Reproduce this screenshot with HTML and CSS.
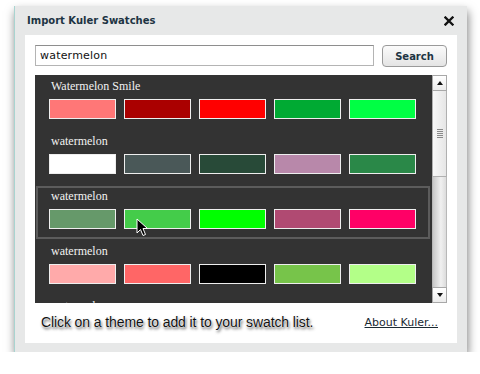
FILE: index.html
```html
<!DOCTYPE html>
<html lang="en">
<head>
    <meta charset="UTF-8">
    <title>Import Kuler Swatches</title>
    <link rel="stylesheet" href="styles.css">
</head>
<body>
    <div class="dialog">
        <div class="titlebar">
            <span class="title">Import Kuler Swatches</span>
            <svg class="close" width="10" height="10" viewBox="0 0 10 10">
                <path d="M1.5 1.5 L8.5 8.5 M8.5 1.5 L1.5 8.5" stroke="#111" stroke-width="2.3" stroke-linecap="square"/>
            </svg>
        </div>
        <div class="panel">
            <div class="searchrow">
                <input class="query" type="text" value="watermelon">
                <button class="search">Search</button>
            </div>
            <div class="results">
                <div class="list">
                    <div class="theme">
                        <div class="name">Watermelon Smile</div>
                        <div class="swatches">
                            <span class="swatch" style="background:#ff7777"></span>
                            <span class="swatch" style="background:#aa0000"></span>
                            <span class="swatch" style="background:#ff0000"></span>
                            <span class="swatch" style="background:#00aa33"></span>
                            <span class="swatch" style="background:#00ff44"></span>
                        </div>
                    </div>
                    <div class="theme">
                        <div class="name">watermelon</div>
                        <div class="swatches">
                            <span class="swatch" style="background:#ffffff"></span>
                            <span class="swatch" style="background:#4a5858"></span>
                            <span class="swatch" style="background:#284a38"></span>
                            <span class="swatch" style="background:#b888aa"></span>
                            <span class="swatch" style="background:#2a8848"></span>
                        </div>
                    </div>
                    <div class="theme hover">
                        <div class="name">watermelon</div>
                        <div class="swatches">
                            <span class="swatch" style="background:#66996a"></span>
                            <span class="swatch" style="background:#44cc4a"></span>
                            <span class="swatch" style="background:#00ff00"></span>
                            <span class="swatch" style="background:#b04a72"></span>
                            <span class="swatch" style="background:#ff0066"></span>
                        </div>
                    </div>
                    <div class="theme">
                        <div class="name">watermelon</div>
                        <div class="swatches">
                            <span class="swatch" style="background:#ffaaaa"></span>
                            <span class="swatch" style="background:#ff6666"></span>
                            <span class="swatch" style="background:#000000"></span>
                            <span class="swatch" style="background:#77c44a"></span>
                            <span class="swatch" style="background:#b3ff88"></span>
                        </div>
                    </div>
                    <div class="theme">
                        <div class="name">watermelon</div>
                    </div>
                </div>
                <div class="scrollbar">
                    <div class="arrow up"></div>
                    <div class="thumb"><span class="grip"></span></div>
                    <div class="track"></div>
                    <div class="arrow down"></div>
                </div>
            </div>
            <div class="footer">
                <span class="hint">Click on a theme to add it to your swatch list.</span>
                <a class="about" href="#">About Kuler...</a>
            </div>
        </div>
    </div>

    <!-- mouse pointer over the hovered theme -->
    <svg class="cursor" width="14" height="20" viewBox="0 0 14 20">
        <path d="M1 1 L1 15 L4.5 11.5 L7 17.5 L9.5 16.5 L7 10.5 L11.5 10.5 Z" fill="#000" stroke="#fff" stroke-width="1"/>
    </svg>
</body>
</html>
```

FILE: styles.css
```css
body {
    margin: 0;
    background: #ffffff;
    font-family: "DejaVu Sans", Verdana, sans-serif;
}

.dialog {
    margin: 6px 0 0 14px;
    width: 453px;
    height: 346px;
    background: #e7e8e8;
    border-left: 1px solid #a9d4d0;
    box-sizing: border-box;
    box-shadow: 1px 5px 9px rgba(0, 0, 0, 0.5);
}

.titlebar {
    height: 29px;
    display: flex;
    align-items: center;
    justify-content: space-between;
    padding: 0 13px 0 12px;
    box-sizing: border-box;
}

.title {
    font-size: 10px;
    font-weight: bold;
    color: #1d3443;
}

.panel {
    margin-left: 10px;
    width: 432px;
    height: 308px;
    background: #ffffff;
    padding: 10px 0 0 10px;
    box-sizing: border-box;
}

.searchrow {
    display: flex;
    gap: 8px;
    height: 22px;
}

.query {
    width: 339px;
    height: 21px;
    box-sizing: border-box;
    margin: 0;
    padding: 0 4px;
    border: 1px solid #b4b4b4;
    border-top-color: #8e8e8e;
    font-family: "DejaVu Sans", sans-serif;
    font-size: 11px;
    letter-spacing: 0.2px;
    color: #111;
    outline: none;
}

.search {
    width: 65px;
    height: 22px;
    margin: 0;
    padding: 0;
    border: 1px solid #9a9a9a;
    border-radius: 4px;
    background: linear-gradient(#fbfbfb, #e4e4e4);
    font-family: "DejaVu Sans", sans-serif;
    font-size: 10px;
    font-weight: bold;
    color: #1d3443;
}

.results {
    display: flex;
    margin-top: 8px;
    height: 228px;
}

.list {
    width: 397px;
    height: 228px;
    background: #333333;
    overflow: hidden;
    padding-top: 1px;
    box-sizing: border-box;
}

.theme {
    height: 53px;
    margin: 0 2px 2px 1px;
    border: 2px solid transparent;
    box-sizing: border-box;
}

.theme.hover {
    border-color: #5c5c5c;
}

.name {
    height: 16px;
    line-height: 16px;
    padding-left: 13px;
    font-family: "Liberation Serif", "Times New Roman", serif;
    font-size: 12px;
    color: #f2f2f2;
}

.swatches {
    display: flex;
    gap: 8px;
    margin: 5px 0 0 11px;
}

.swatch {
    width: 67px;
    height: 20px;
    box-sizing: border-box;
    border: 1px solid #eeeeee;
}

.scrollbar {
    width: 15px;
    display: flex;
    flex-direction: column;
    background: #f2f2f2;
}

.arrow {
    height: 16px;
    box-sizing: border-box;
    border: 1px solid #a8a8a8;
    background: linear-gradient(#ffffff, #ececec);
    display: flex;
    align-items: center;
    justify-content: center;
}

.arrow::after {
    content: "";
    border-left: 3px solid transparent;
    border-right: 3px solid transparent;
}

.arrow.up::after {
    border-bottom: 4px solid #111;
}

.arrow.down::after {
    border-top: 4px solid #111;
}

.thumb {
    height: 86px;
    box-sizing: border-box;
    border: 1px solid #b0b0b0;
    border-top: none;
    background: linear-gradient(to right, #f8f8f8, #e6e6e6);
    display: flex;
    align-items: center;
    justify-content: center;
}

.grip {
    width: 6px;
    height: 9px;
    background: repeating-linear-gradient(#8a8a8a 0 1px, transparent 1px 2px);
}

.track {
    flex: 1;
    border-left: 1px solid #b8b8b8;
    border-right: 1px solid #b8b8b8;
    background: linear-gradient(to right, #c8c8c8, #f0f0f0 60%, #dcdcdc);
}

.footer {
    height: 38px;
    display: flex;
    align-items: center;
    justify-content: space-between;
    padding: 0 19px 0 6px;
}

.hint {
    font-family: "Liberation Sans", Arial, sans-serif;
    font-size: 14px;
    letter-spacing: -0.1px;
    color: #111;
    text-shadow: 0 0 1px #fff, 0 0 2px #fff, 1px 2px 3px rgba(0, 0, 0, 0.75);
}

.about {
    font-family: "DejaVu Sans", sans-serif;
    font-size: 11px;
    color: #1b2a33;
    text-decoration: underline;
}

.cursor {
    position: absolute;
    left: 136px;
    top: 218px;
}
```
